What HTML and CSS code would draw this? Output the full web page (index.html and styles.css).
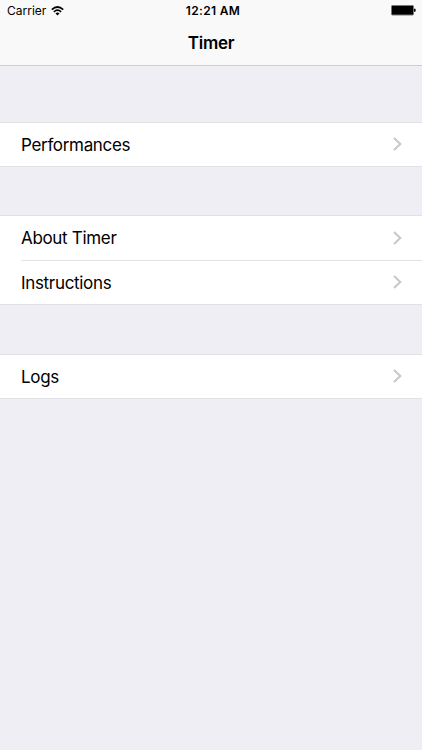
FILE: index.html
```
<!DOCTYPE html>
<html lang="en">
<head>
    <meta charset="UTF-8">
    <meta name="viewport" content="width=device-width, initial-scale=1.0">
    <title>Timer</title>
    <link rel="stylesheet" href="styles.css">
</head>
<body>
    <header class="header">
        <div class="status-bar">
            <div class="carrier">
                <span>Carrier</span>
                <svg class="wifi" width="13" height="10" viewBox="0 0 13 10">
                    <path d="M0.8 3.6 Q6.5 -1.6 12.2 3.6" />
                    <path d="M2.9 5.8 Q6.5 2.6 10.1 5.8" />
                    <path class="wifi-dot" d="M4.5 7.4 Q6.5 5.8 8.5 7.4 L6.5 9.5 Z" />
                </svg>
            </div>
            <span class="time">12:21 AM</span>
            <svg class="battery" width="26" height="11" viewBox="0 0 26 11">
                <rect class="battery-case" x="0.5" y="0.5" width="22" height="9.5" rx="1" />
                <path d="M23 3.8 L24.4 3.8 Q25 5.3 24.4 6.8 L23 6.8 Z" />
            </svg>
        </div>
        <h1 class="title">Timer</h1>
    </header>

    <main>
        <ul class="group">
            <li class="row">
                <span>Performances</span>
                <svg class="chevron" width="9" height="14" viewBox="0 0 9 14"><path d="M1 1 L7.3 7 L1 13" /></svg>
            </li>
        </ul>
        <ul class="group">
            <li class="row">
                <span>About Timer</span>
                <svg class="chevron" width="9" height="14" viewBox="0 0 9 14"><path d="M1 1 L7.3 7 L1 13" /></svg>
            </li>
            <li class="row">
                <span>Instructions</span>
                <svg class="chevron" width="9" height="14" viewBox="0 0 9 14"><path d="M1 1 L7.3 7 L1 13" /></svg>
            </li>
        </ul>
        <ul class="group">
            <li class="row">
                <span>Logs</span>
                <svg class="chevron" width="9" height="14" viewBox="0 0 9 14"><path d="M1 1 L7.3 7 L1 13" /></svg>
            </li>
        </ul>
    </main>
</body>
</html>
```
FILE: styles.css
```
* {
    box-sizing: border-box;
}

body {
    margin: 0;
    min-height: 750px;
    font-family: Inter, "Liberation Sans", sans-serif;
    background-color: #efeef4;
    color: #000;
}

.header {
    height: 66px;
    background-color: #f9f9f9;
    border-bottom: 1px solid #cfced5;
    margin-bottom: 56px;
}

/* Status bar */
.status-bar {
    display: grid;
    grid-template-columns: 1fr auto 1fr;
    align-items: center;
    height: 21px;
    padding: 0 5px 0 7px;
    font-size: 12px;
}

.carrier {
    display: flex;
    align-items: center;
    gap: 5px;
}

.wifi {
    fill: none;
    stroke: #000;
    stroke-width: 1.7;
}

.wifi-dot {
    fill: #000;
    stroke: none;
}

.time {
    padding-left: 2px;
    font-weight: 600;
    letter-spacing: 0.35px;
}

.battery {
    justify-self: end;
}

.battery-case {
    stroke: #777;
    stroke-width: 1;
}

.title {
    margin: 0;
    font-size: 17px;
    font-weight: 600;
    letter-spacing: -0.3px;
    line-height: 44px;
    text-align: center;
}

/* Menu groups */
.group {
    list-style: none;
    margin: 0 0 48px;
    padding: 0;
    background-color: #fff;
    border-top: 1px solid #e2e1e6;
    border-bottom: 1px solid #e2e1e6;
}

.group:last-child {
    margin-top: 49px;
}

.row {
    display: flex;
    align-items: center;
    justify-content: space-between;
    height: 44px;
    margin-left: 21px;
    padding-right: 20px;
    font-size: 17px;
    letter-spacing: -0.32px;
}

.row:only-child {
    height: 43px;
}

.row + .row {
    border-top: 1px solid #e2e1e6;
}

.chevron {
    margin-bottom: 1px;
    fill: none;
    stroke: #c7c7cc;
    stroke-width: 2;
}
```
